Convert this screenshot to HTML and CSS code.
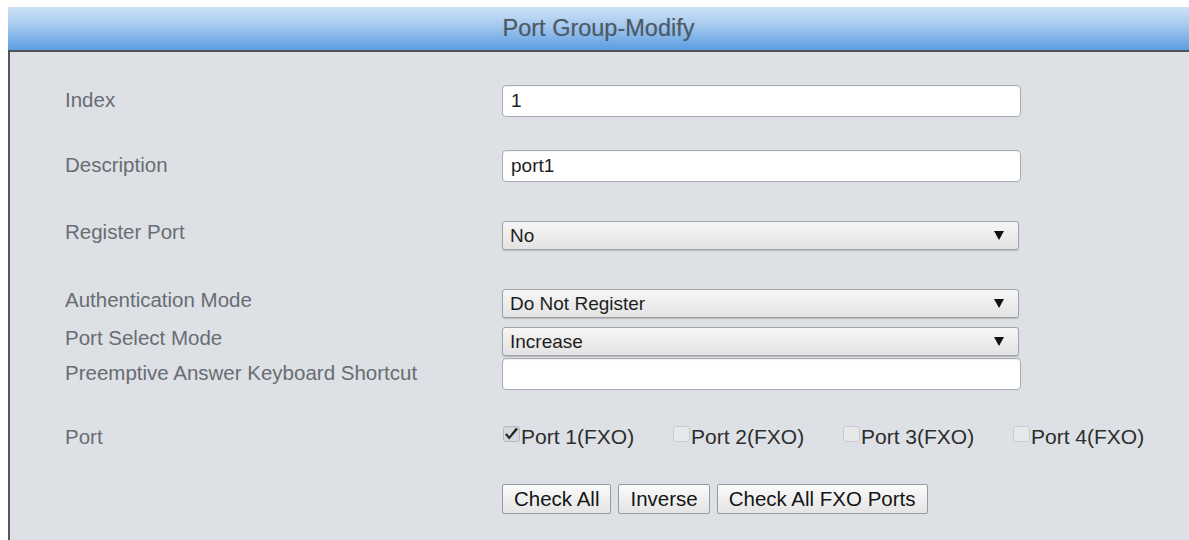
FILE: index.html
```html
<!DOCTYPE html>
<html lang="en">
<head>
<meta charset="utf-8">
<title>Port Group-Modify</title>
<link rel="stylesheet" href="styles.css">
</head>
<body>
<div class="panel">
  <div class="panel-head">
    <h1 class="panel-title">Port Group-Modify</h1>
  </div>
  <form class="panel-body">
    <div class="row">
      <label class="row-label" for="f-index">Index</label>
      <input class="field" id="f-index" type="text" value="1">
    </div>
    <div class="row row-desc">
      <label class="row-label" for="f-desc">Description</label>
      <input class="field" id="f-desc" type="text" value="port1">
    </div>
    <div class="row row-select row-reg">
      <label class="row-label" for="f-reg">Register Port</label>
      <div class="select-wrap">
        <select class="select" id="f-reg"><option>No</option><option>Yes</option></select>
        <svg class="select-arrow" width="10" height="9" viewBox="0 0 10 9"><path d="M0 0H10L5 9Z" fill="#111"/></svg>
      </div>
    </div>
    <div class="row row-select row-auth">
      <label class="row-label" for="f-auth">Authentication Mode</label>
      <div class="select-wrap">
        <select class="select" id="f-auth"><option>Do Not Register</option></select>
        <svg class="select-arrow" width="10" height="9" viewBox="0 0 10 9"><path d="M0 0H10L5 9Z" fill="#111"/></svg>
      </div>
    </div>
    <div class="row row-select row-mode">
      <label class="row-label" for="f-mode">Port Select Mode</label>
      <div class="select-wrap">
        <select class="select" id="f-mode"><option>Increase</option><option>Decrease</option><option>Cyclic</option></select>
        <svg class="select-arrow" width="10" height="9" viewBox="0 0 10 9"><path d="M0 0H10L5 9Z" fill="#111"/></svg>
      </div>
    </div>
    <div class="row row-key">
      <label class="row-label" for="f-key">Preemptive Answer Keyboard Shortcut</label>
      <input class="field" id="f-key" type="text" value="">
    </div>
    <div class="row row-port">
      <span class="row-label">Port</span>
      <div class="checks">
        <label class="check">
          <span class="box is-checked"><svg width="15" height="14" viewBox="0 0 15 14"><path d="M1 7.6L5.2 12.6L14 2.2L12 0.8L5.2 9.2L2.9 6.2Z" fill="#222"/></svg></span>
          <span class="check-text">Port 1(FXO)</span>
        </label>
        <label class="check">
          <span class="box"></span>
          <span class="check-text">Port 2(FXO)</span>
        </label>
        <label class="check">
          <span class="box"></span>
          <span class="check-text">Port 3(FXO)</span>
        </label>
        <label class="check">
          <span class="box"></span>
          <span class="check-text">Port 4(FXO)</span>
        </label>
      </div>
    </div>
    <div class="row row-actions">
      <span class="row-label"></span>
      <div class="actions">
        <button class="btn" type="button">Check All</button>
        <button class="btn" type="button">Inverse</button>
        <button class="btn" type="button">Check All FXO Ports</button>
      </div>
    </div>
  </form>
</div>
</body>
</html>
```
FILE: styles.css
```css
html, body {
  overflow: hidden;
}

body {
  margin: 7px 0 0 8px;
  background: #ffffff;
  font-family: "Liberation Sans", Arial, sans-serif;
}

/* title bar */
.panel-head {
  height: 43px;
  background: linear-gradient(#cde2f6 0%, #a9cbef 40%, #5b9de2 100%);
  border-bottom: 2px solid #505357;
  display: flex;
  align-items: center;
  justify-content: center;
}

.panel-title {
  margin: 0;
  font-size: 23.5px;
  font-weight: normal;
  color: #4d5966;
  text-shadow: 0 0 1px rgba(80, 90, 100, 0.4);
}

/* form area */
.panel-body {
  display: block;
  box-sizing: border-box;
  margin: 0;
  min-height: 488px;
  background: #dde0e4;
  border-left: 2px solid #54575b;
  padding: 33px 0 0 55px;
}

.row {
  display: grid;
  grid-template-columns: 437px auto;
  align-items: baseline;
}

/* labels beside drop-downs and the port list sit level with the top of the control */
.row-select,
.row-port {
  align-items: start;
}

.row-select .row-label {
  margin-top: -1px;
}

.row-desc { margin-top: 33px; }
.row-reg { margin-top: 39px; }
.row-auth { margin-top: 39px; }
.row-mode { margin-top: 9px; }
.row-key { margin-top: 2px; }
.row-port { margin-top: 35px; }
.row-actions { margin-top: 35px; }

.row-label {
  font-size: 20.5px;
  color: #686d73;
}

.field {
  box-sizing: border-box;
  width: 519px;
  height: 32px;
  margin: 0;
  padding: 0 8px;
  border: 1px solid #a8abaf;
  border-radius: 4px;
  background: #ffffff;
  font-family: "Liberation Sans", Arial, sans-serif;
  font-size: 19px;
  color: #1e1e1e;
  box-shadow: inset 0 1px 1px rgba(0, 0, 0, 0.06);
}

/* drop-down lists */
.select-wrap {
  position: relative;
  width: 517px;
}

.select {
  -webkit-appearance: none;
  appearance: none;
  display: block;
  box-sizing: border-box;
  width: 517px;
  height: 29px;
  margin: 0;
  padding: 0 30px 0 7px;
  border: 1px solid #9fa2a6;
  border-radius: 3px;
  background: linear-gradient(#f6f6f6, #e3e3e3);
  box-shadow: 0 1px 1px rgba(0, 0, 0, 0.18);
  font-family: "Liberation Sans", Arial, sans-serif;
  font-size: 19px;
  color: #1e1e1e;
}

.select-arrow {
  position: absolute;
  right: 15px;
  top: 10px;
  pointer-events: none;
}

/* port checkboxes */
.checks {
  display: grid;
  grid-template-columns: repeat(4, 170px);
}

.check {
  display: flex;
  align-items: flex-start;
  font-size: 21px;
  color: #2d2d2d;
}

.box {
  box-sizing: border-box;
  width: 17px;
  height: 16px;
  margin: 1px 1px 0 1px;
  border: 1px solid #c9cbce;
  border-radius: 3px;
  background: #e6e8ea;
  display: flex;
  align-items: center;
  justify-content: center;
}

.box.is-checked {
  border-color: #b5b7ba;
  background: #d6d8db;
}

.check-text {
  line-height: 24px;
}

/* action buttons */
.actions {
  display: flex;
  gap: 7px;
}

.btn {
  height: 30px;
  margin: 0;
  padding: 0 11px;
  border: 1px solid #979a9e;
  border-radius: 2px;
  background: linear-gradient(#fbfbfb, #e4e4e4);
  font-family: "Liberation Sans", Arial, sans-serif;
  font-size: 20.5px;
  color: #151515;
}
```
